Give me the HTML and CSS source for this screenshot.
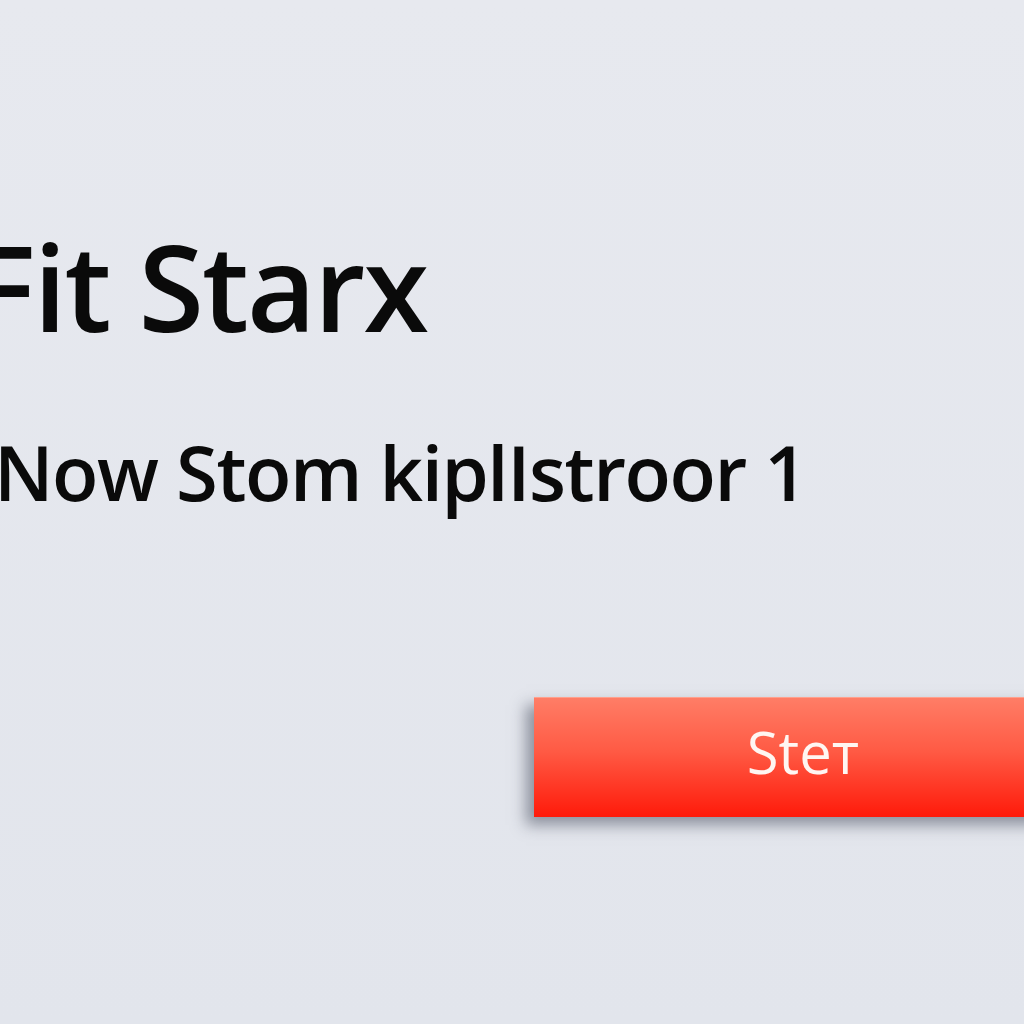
FILE: index.html
```html
<!DOCTYPE html>
<html lang="en">
<head>
    <meta charset="UTF-8">
    <meta name="viewport" content="width=device-width, initial-scale=1.0">
    <title>Fit Starx</title>
    <link rel="stylesheet" href="styles.css">
</head>
<body>
    <div class="screen">
        <h1 class="title">Fit Starx</h1>
        <p class="subtitle">Now Stom kiplIstroor 1</p>
        <div class="actions">
            <button class="start-btn">Steт</button>
        </div>
    </div>
</body>
</html>
```

FILE: styles.css
```css
* {
    margin: 0;
    padding: 0;
    box-sizing: border-box;
    font-family: 'Open Sans', 'Liberation Sans', sans-serif;
}
html, body {
    width: 1024px;
    height: 1024px;
    overflow: hidden;
}
body {
    background: linear-gradient(180deg, #e7e9ef, #e2e5ec);
    color: #0a0a0a;
}
.screen {
    display: flex;
    flex-direction: column;
    padding-top: 227px;
}
.title {
    font-size: 119px;
    font-weight: 600;
    line-height: 1;
    margin-left: -28px;
    letter-spacing: -2px;
    white-space: nowrap;
}
.subtitle {
    font-size: 76px;
    font-weight: 600;
    line-height: 1;
    margin-top: 88px;
    margin-left: -6px;
    letter-spacing: -1.4px;
    white-space: nowrap;
}
.actions {
    display: flex;
    margin-top: 187px;
    padding-left: 534px;
}
.start-btn {
    flex: none;
    width: 546px;
    height: 120px;
    border: none;
    display: flex;
    justify-content: center;
    align-items: center;
    padding-bottom: 12px;
    padding-right: 8px;
    font-size: 58px;
    font-weight: 400;
    line-height: 1;
    color: #fff6f2;
    background: linear-gradient(180deg, #ff7d66 0%, #ff5a44 45%, #ff1a0a 100%);
    border-top: 1px solid #ffa08c;
    box-shadow: -8px 8px 14px rgba(55, 62, 80, 0.5);
    cursor: pointer;
}
```
